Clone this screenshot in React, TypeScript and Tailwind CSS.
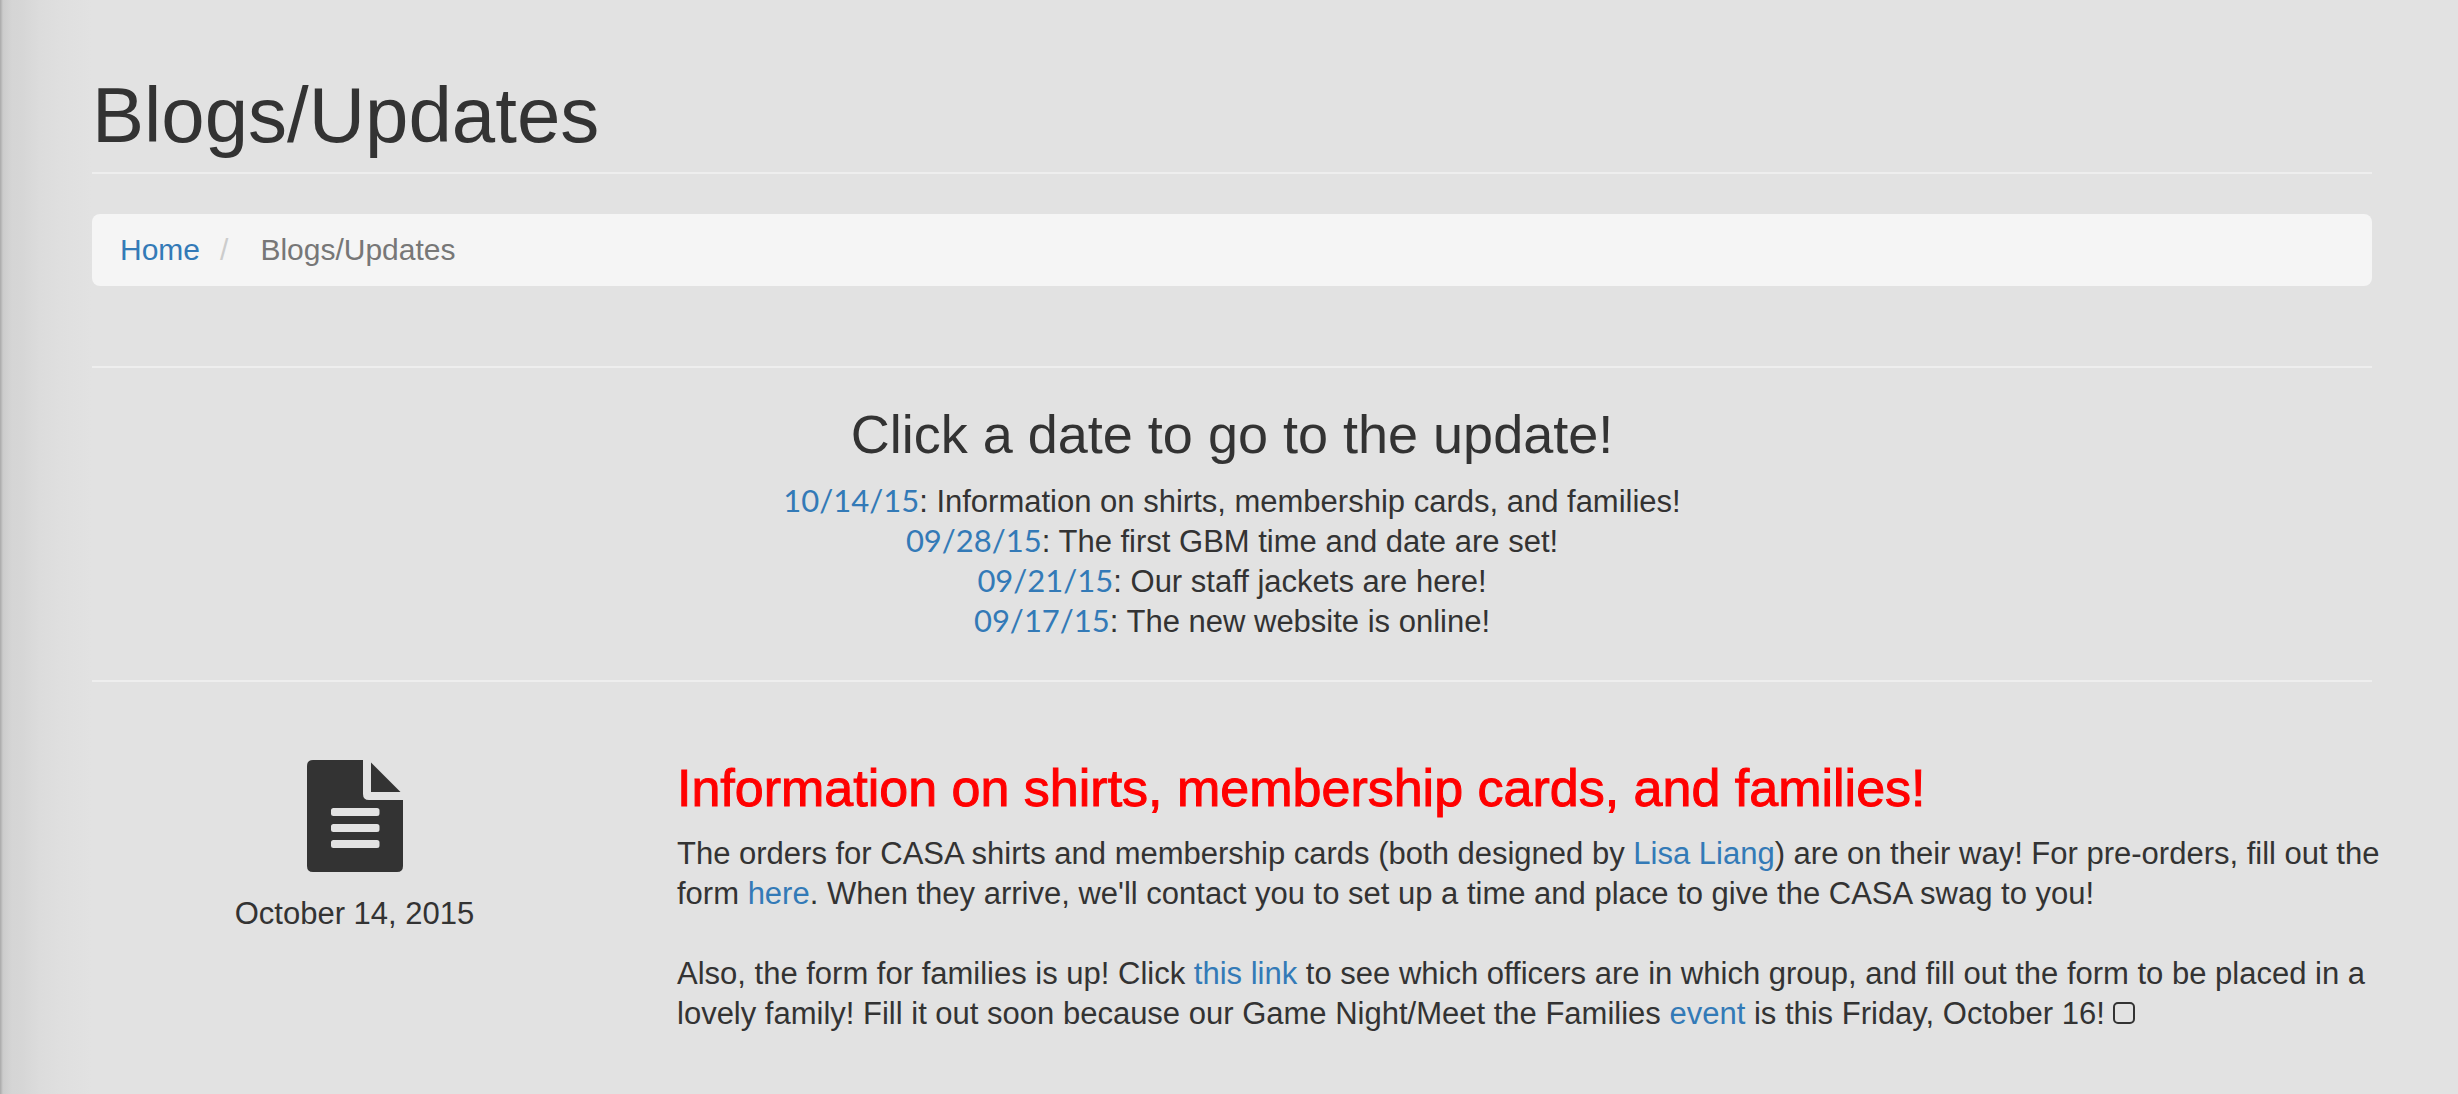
import type { ReactNode } from "react";

const updates = [
  { id: "update-4", date: "10/14/15", title: "Information on shirts, membership cards, and families!" },
  { id: "update-3", date: "09/28/15", title: "The first GBM time and date are set!" },
  { id: "update-2", date: "09/21/15", title: "Our staff jackets are here!" },
  { id: "update-1", date: "09/17/15", title: "The new website is online!" },
];

function Link({ href, children }: { href: string; children: ReactNode }) {
  return (
    <a href={href} className="text-[#337ab7] hover:underline">
      {children}
    </a>
  );
}

function DocumentIcon() {
  return (
    <svg viewBox="0 0 96 112" className="h-28 w-24 fill-[#333]" aria-hidden="true">
      <path
        fillRule="evenodd"
        d="M6 0H56V34Q56 40 62 40H96V106Q96 112 90 112H6Q0 112 0 106V6Q0 0 6 0ZM26.500 48Q24 48 24 50.500V53.500Q24 56 26.500 56H70Q72.500 56 72.500 53.500V50.500Q72.500 48 70 48ZM26.500 64Q24 64 24 66.500V69.500Q24 72 26.500 72H70Q72.500 72 72.500 69.500V66.500Q72.500 64 70 64ZM26.500 80Q24 80 24 82.500V85.500Q24 88 26.500 88H70Q72.500 88 72.500 85.500V82.500Q72.500 80 70 80Z"
      />
      <path d="M64 2.500L93.500 32H64Z" />
    </svg>
  );
}

export default function App() {
  return (
    <div className="min-h-screen bg-[#e2e2e2] bg-[linear-gradient(to_right,#a8a8a8_0px,#cccccc_3px,#d5d5d5_12px,#d6d6d6_22px,#dcdcdc_40px,#dfdfdf_60px,#e2e2e2_92px)] pt-[75px] pr-[86px] pb-10 pl-[92px] font-['Liberation_Sans',Arial,sans-serif] text-[31px] leading-10 text-[#333]">
      <header className="border-b-2 border-[#eee] pb-[17px]">
        <h1 className="text-[78px] leading-[80px]">Blogs/Updates</h1>
      </header>

      <nav aria-label="Breadcrumb" className="mt-10 rounded-lg bg-[#f5f5f5] px-7 py-4">
        <ol className="flex text-[30px]">
          <li>
            <Link href="#home">Home</Link>
          </li>
          <li aria-hidden="true" className="pr-8 pl-5 text-[#ccc]">
            /
          </li>
          <li aria-current="page" className="text-[#777]">
            Blogs/Updates
          </li>
        </ol>
      </nav>

      <section className="mt-20 border-y-2 border-[#eee] py-10 text-center">
        <h2 className="text-[54px] leading-[52px]">Click a date to go to the update!</h2>
        <ul className="mt-5">
          {updates.map((u) => (
            <li key={u.id} className="h-10">
              <span className="font-[Lato,sans-serif]">
                <Link href={`#${u.id}`}>{u.date}</Link>
              </span>
              : {u.title}
            </li>
          ))}
        </ul>
      </section>

      <article id="update-4" className="-mx-[30px] mt-[78px] grid grid-cols-4">
        <div className="flex flex-col items-center">
          <DocumentIcon />
          <time dateTime="2015-10-14" className="mt-[22px]">
            October 14, 2015
          </time>
        </div>
        <div className="col-span-3 pt-0.5 pr-3 pl-[30px]">
          <h2 className="text-[52px] leading-[52px] text-[red] [-webkit-text-stroke:1px_red]">
            Information on shirts, membership cards, and families!
          </h2>
          <p className="mt-5">
            The orders for CASA shirts and membership cards (both designed by <Link href="#lisa">Lisa Liang</Link>) are
            on their way! For pre-orders, fill out the form <Link href="#order">here</Link>. When they arrive, we'll
            contact you to set up a time and place to give the CASA swag to you!
          </p>
          <p className="mt-10">
            Also, the form for families is up! Click <Link href="#families">this link</Link> to see which officers are
            in which group, and fill out the form to be placed in a lovely family! Fill it out soon because our Game
            Night/Meet the Families <Link href="#event">event</Link> is this Friday, October 16!{" "}
            <span className="inline-block size-[22px] rounded-[5px] border-2 border-[#333]" />
          </p>
        </div>
      </article>
    </div>
  );
}
